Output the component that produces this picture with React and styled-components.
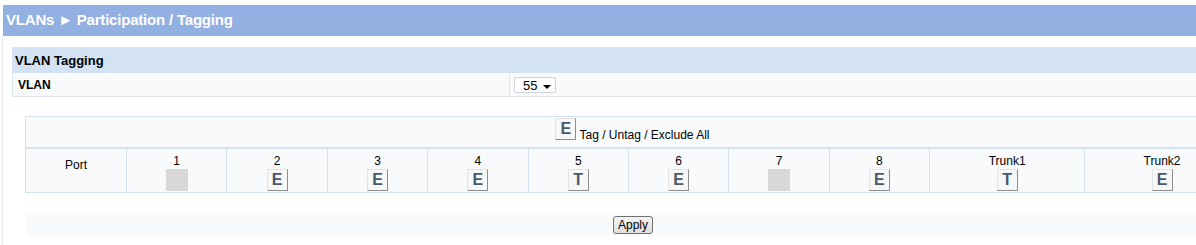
import styled, { createGlobalStyle } from "styled-components";

const GlobalStyle = createGlobalStyle`
	body {
		margin: 0;
		background: #fff;
		font-family: "Liberation Sans", Arial, sans-serif;
		overflow: hidden;
	}
`;

const ports = [
	{ label: "1", state: null },
	{ label: "2", state: "E" },
	{ label: "3", state: "E" },
	{ label: "4", state: "E" },
	{ label: "5", state: "T" },
	{ label: "6", state: "E" },
	{ label: "7", state: null },
	{ label: "8", state: "E" },
	{ label: "Trunk1", state: "T" },
	{ label: "Trunk2", state: "E" },
];

const App = () => {
	return (
		<Page>
			<GlobalStyle />
			<TitleBar>VLANs ► Participation / Tagging</TitleBar>
			<Body>
				<Section>
					<SectionHead>VLAN Tagging</SectionHead>
					<FieldRow>
						<FieldLabel>VLAN</FieldLabel>
						<FieldValue>
							<Select>
								55
								<Caret />
							</Select>
						</FieldValue>
					</FieldRow>
				</Section>
				<TagPanel>
					<AllRow>
						<ToggleButton>E</ToggleButton>
						<AllText>Tag / Untag / Exclude All</AllText>
					</AllRow>
					<PortGrid>
						<PortHead>Port</PortHead>
						{ports.map((p) => (
							<PortCell key={p.label}>
								<PortName>{p.label}</PortName>
								{p.state ? (
									<ToggleButton>{p.state}</ToggleButton>
								) : (
									<Disabled />
								)}
							</PortCell>
						))}
					</PortGrid>
				</TagPanel>
				<ActionBar>
					<ApplyButton>Apply</ApplyButton>
				</ActionBar>
			</Body>
		</Page>
	);
};

const Page = styled.div`
	padding-top: 5px;
	width: 1196px;
	height: 245px;
	box-sizing: border-box;
`;

const TitleBar = styled.div`
	margin-left: 3px;
	height: 31px;
	line-height: 29px;
	background: #92b0e2;
	color: #fff;
	font-size: 15px;
	font-weight: bold;
	padding-left: 3px;
	white-space: nowrap;
	letter-spacing: -0.2px;
`;

const Body = styled.div`
	margin-left: 2px;
	border-left: 1px solid #e2e9f2;
	padding: 11px 0 0 9px;
	height: 209px;
	box-sizing: border-box;
`;

const Section = styled.div`
	display: flex;
	flex-direction: column;
`;

const SectionHead = styled.div`
	height: 26px;
	line-height: 27px;
	background: #d4e3f3;
	padding-left: 3px;
	font-size: 13px;
	font-weight: bold;
	color: #000;
`;

const FieldRow = styled.div`
	display: flex;
	height: 24px;
	background: #f8fafc;
	border-left: 1px solid #dde6ef;
	border-bottom: 1px solid #dde6ef;
	box-sizing: border-box;
`;

const FieldLabel = styled.div`
	width: 491px;
	padding-left: 5px;
	border-right: 1px solid #dde6ef;
	font-size: 12px;
	font-weight: bold;
	line-height: 24px;
`;

const FieldValue = styled.div`
	display: flex;
	align-items: center;
	padding-left: 4px;
`;

const Select = styled.div`
	display: flex;
	align-items: center;
	justify-content: space-between;
	width: 42px;
	height: 16px;
	box-sizing: border-box;
	padding: 0 4px 0 8px;
	border: 1px solid #cfd4da;
	border-radius: 2px;
	background: #fff;
	font-size: 13px;
	margin-top: 1px;
`;

const Caret = styled.span`
	width: 0;
	height: 0;
	border-left: 4px solid transparent;
	border-right: 4px solid transparent;
	border-top: 4px solid #000;
	margin-top: 3px;
`;

const TagPanel = styled.div`
	margin: 19px 0 0 13px;
	width: 1215px;
	border: 1px solid #d6e2ee;
	background: #f8fafc;
	box-sizing: border-box;
`;

const AllRow = styled.div`
	display: flex;
	justify-content: center;
	align-items: flex-end;
	height: 32px;
	padding-bottom: 7px;
	box-sizing: border-box;
	border-bottom: 2px solid #d6e2ee;
`;

const AllText = styled.span`
	font-size: 12px;
	margin-left: 3px;
	line-height: 12px;
	margin-bottom: -1px;
`;

const PortGrid = styled.div`
	display: grid;
	grid-template-columns: 100px repeat(8, 100.4px) 155px 1fr;
	height: 43px;
`;

const PortHead = styled.div`
	font-size: 12px;
	text-align: center;
	padding-top: 9px;
`;

const PortCell = styled.div`
	display: flex;
	flex-direction: column;
	align-items: center;
	border-left: 1px solid #d6e2ee;
	padding-top: 5px;
	box-sizing: border-box;
`;

const PortName = styled.div`
	font-size: 12px;
	line-height: 14px;
	margin-bottom: 1px;
`;

const ToggleButton = styled.button`
	width: 21px;
	height: 22px;
	padding: 0;
	margin: 0;
	box-sizing: border-box;
	background: #f7f7f7;
	border: 1px solid;
	border-color: #e3e3e3 #8d8d8d #8d8d8d #e3e3e3;
	font-family: "Liberation Sans", Arial, sans-serif;
	font-size: 16px;
	font-weight: bold;
	line-height: 20px;
	color: #47596b;
`;

const Disabled = styled.div`
	width: 22px;
	height: 22px;
	background: #d8d8d8;
`;

const ActionBar = styled.div`
	margin: 21px 0 0 15px;
	width: 1212px;
	height: 22px;
	background: #f8fafc;
	display: flex;
	justify-content: center;
	align-items: center;
`;

const ApplyButton = styled.button`
	width: 40px;
	height: 18px;
	padding: 0;
	box-sizing: border-box;
	border: 1px solid #707070;
	border-radius: 3px;
	background: linear-gradient(#f4f4f4, #dedede);
	font-family: "Liberation Sans", Arial, sans-serif;
	font-size: 12px;
	color: #000;
`;

export default App;
